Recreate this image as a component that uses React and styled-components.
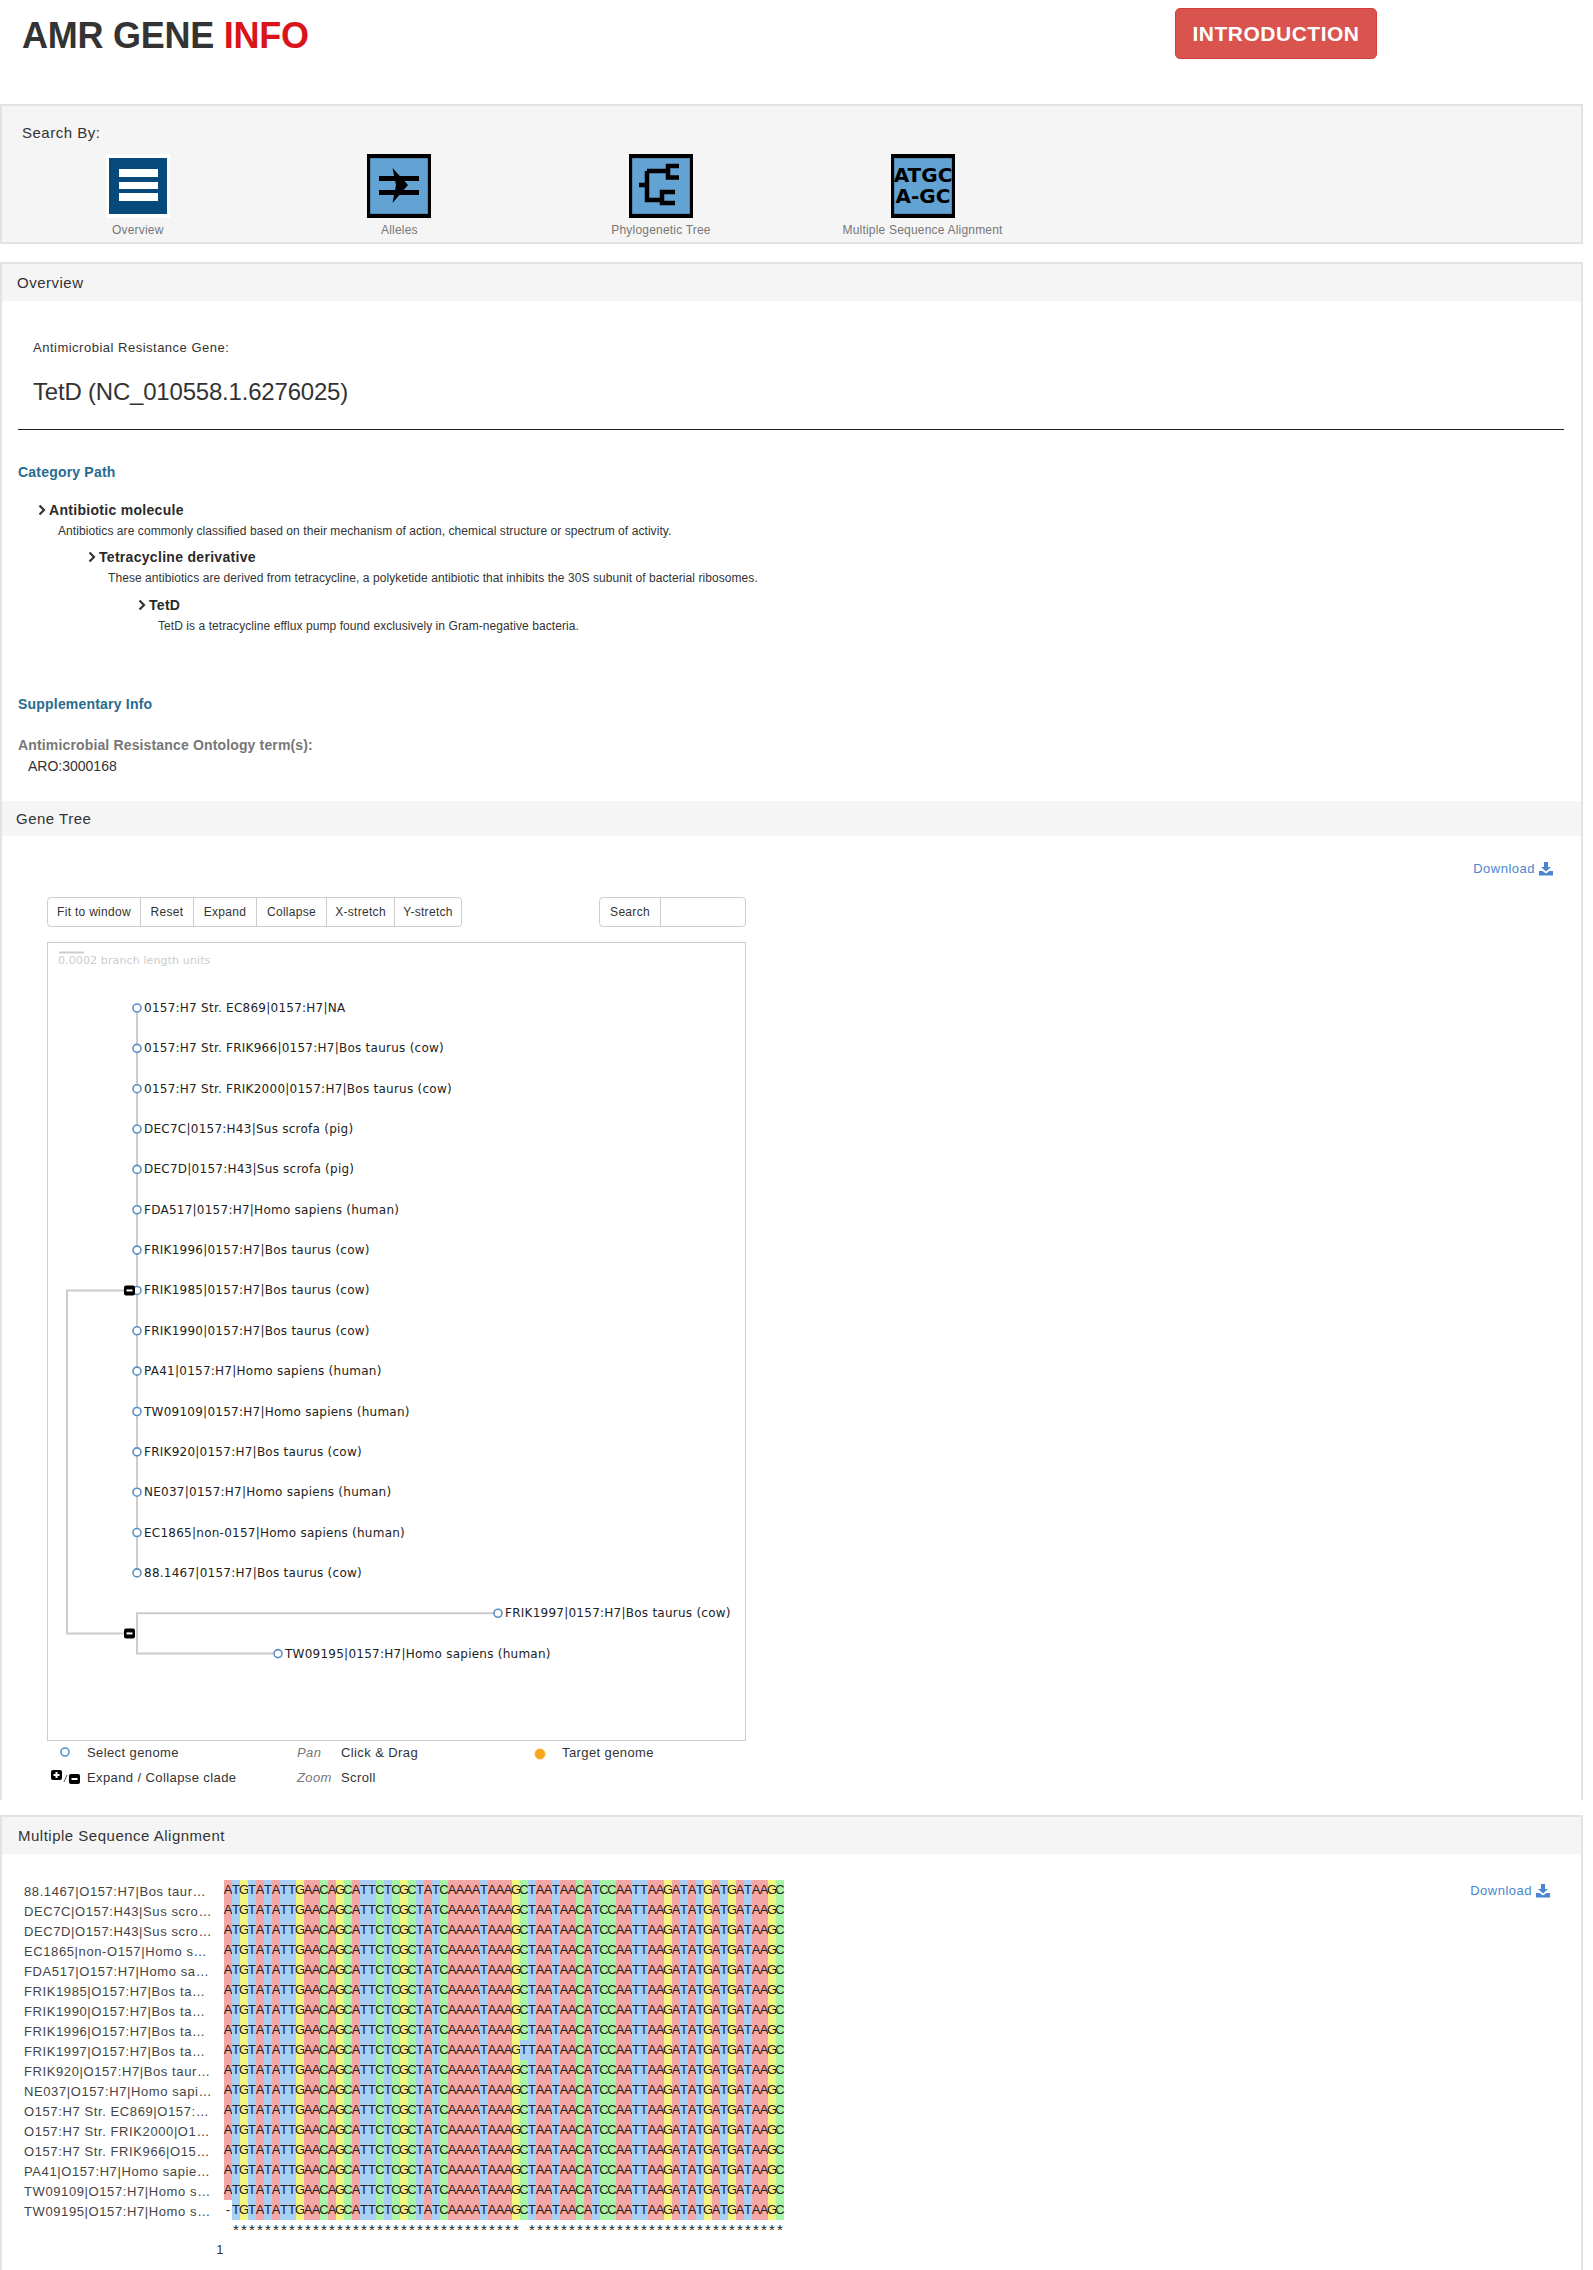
import React from "react";
import styled, { createGlobalStyle } from "styled-components";

const GlobalStyle = createGlobalStyle`
  body {
    margin: 0;
    background: #fff;
    color: #333;
    font-family: "Liberation Sans", Arial, sans-serif;
    font-size: 13px;
    letter-spacing: 0.5px;
  }
`;

const Page = styled.div`
  width: 1583px;
`;

const Header = styled.header`
  display: grid;
  grid-template-columns: 1175px 202px;
  height: 104px;
  padding-top: 8px;
  box-sizing: border-box;
`;

const Title = styled.h1`
  margin: 0;
  padding: 10px 0 0 22px;
  font-size: 36px;
  line-height: 36px;
  font-weight: 700;
  letter-spacing: -0.25px;
  color: #333;
`;

const TitleAccent = styled.span`
  color: #d9141a;
`;

const IntroButton = styled.button`
  height: 51px;
  padding-top: 2px;
  border: 1px solid #d43f3a;
  border-radius: 5px;
  background: #d9534f;
  color: #fff;
  font-family: inherit;
  font-size: 21px;
  font-weight: 700;
  letter-spacing: 0.5px;
`;

const SearchPanel = styled.section`
  height: 140px;
  box-sizing: border-box;
  margin-bottom: 18px;
  padding-top: 18px;
  border: 2px solid #e3e3e3;
  background: #f5f5f5;
`;

const SearchLabel = styled.div`
  margin-left: 20px;
  font-size: 15px;
  line-height: 18px;
`;

const SearchRow = styled.div`
  display: grid;
  grid-template-columns: repeat(4, 261.6px);
  margin: 12px 0 0 5px;
`;

const SearchTile = styled.div`
  display: flex;
  flex-direction: column;
  align-items: center;
  gap: 4px;
  color: #777;
  font-size: 12px;
  line-height: 16px;
  letter-spacing: 0.2px;
`;

const TileIcon = styled.svg`
  display: block;
  width: 64px;
  height: 64px;
`;

const Panel = styled.section`
  border: 2px solid #e3e3e3;
  border-bottom: 0;
  margin-bottom: ${(props) => props.$gap || 0}px;
  padding-bottom: ${(props) => props.$bottom || 0}px;
`;

const PanelHeading = styled.h2`
  margin: 0;
  height: ${(props) => props.$height || 37}px;
  line-height: ${(props) => (props.$height || 37) + 1}px;
  padding-left: ${(props) => props.$left || 15}px;
  background: #f5f5f5;
  font-size: 15px;
  font-weight: 400;
  letter-spacing: 0.5px;
`;

const OverviewBody = styled.div`
  padding-bottom: 26px;
`;

const GeneLabel = styled.div`
  margin: 38px 0 0 31px;
  line-height: 18px;
`;

const GeneName = styled.div`
  margin: 20px 0 0 31px;
  font-size: 24px;
  line-height: 30px;
  letter-spacing: -0.2px;
`;

const Rule = styled.hr`
  margin: 22px 17px 0 16px;
  border: 0;
  border-top: 1px solid #222;
`;

const SubTitle = styled.h3`
  margin: ${(props) => props.$top}px 0 0 16px;
  color: #286b8f;
  font-size: 14px;
  line-height: 18px;
  letter-spacing: 0.2px;
`;

const CategoryItem = styled.div`
  margin-top: ${(props) => props.$top}px;
  padding-left: ${(props) => 36 + props.$depth * 50}px;
`;

const CategoryName = styled.div`
  display: flex;
  align-items: center;
  gap: 3px;
  color: #2a2a2a;
  font-size: 14px;
  font-weight: 700;
  line-height: 20px;
  letter-spacing: 0.3px;
`;

const CategoryText = styled.div`
  margin: 2px 0 0 20px;
  font-size: 12px;
  line-height: 18px;
  letter-spacing: 0.07px;
`;

const OntologyTitle = styled.div`
  margin: 23px 0 0 16px;
  color: #777;
  font-size: 14px;
  font-weight: 700;
  line-height: 18px;
  letter-spacing: 0.15px;
`;

const OntologyTerm = styled.div`
  margin: 3px 0 0 26px;
  line-height: 18px;
  font-size: 14px;
  letter-spacing: 0;
`;

const DownloadLink = styled.a`
  display: flex;
  align-items: center;
  justify-content: flex-end;
  gap: 4px;
  color: #4a86d0;
  font-size: 13px;
  line-height: 18px;
`;

const DownloadRow = styled.div`
  margin-top: 24px;
  padding-right: 28px;
`;

const MsaDownload = styled(DownloadLink)`
  align-self: flex-start;
  margin-top: 2px;
`;

const TreeSection = styled.div`
  margin-left: 45px;
  width: 699px;
`;

const Toolbar = styled.div`
  display: flex;
  justify-content: space-between;
  margin-top: 19px;
`;

const ButtonGroup = styled.div`
  display: flex;
  height: 30px;
  box-sizing: border-box;
  border: 1px solid #ccc;
  border-radius: 4px;
`;

const ToolButton = styled.div`
  display: flex;
  align-items: center;
  width: ${(props) => props.$width}px;
  justify-content: center;
  box-sizing: border-box;
  border-left: 1px solid #ccc;
  font-size: 12px;
  letter-spacing: 0.3px;
  &:first-child {
    border-left: 0;
  }
`;

const TreeBox = styled.div`
  margin-top: 15px;
  height: 799px;
  box-sizing: border-box;
  border: 1px solid #ccc;
`;

const TreeSvg = styled.svg`
  display: block;
  width: 697px;
  height: 797px;
  font-family: "DejaVu Sans", sans-serif;
  font-size: 12px;
  letter-spacing: 0.25px;
`;

const Legend = styled.div`
  display: grid;
  grid-template-columns: 40px 210px 44px 193px 28px auto;
  grid-auto-rows: 25px;
  align-items: center;
  margin-top: -1px;
  font-size: 13px;
  letter-spacing: 0.4px;
  color: #333;
`;

const LegendHint = styled.span`
  color: #777;
  font-style: italic;
`;

const LegendIcon = styled.svg`
  display: block;
`;

const MsaBody = styled.div`
  display: flex;
  justify-content: space-between;
  padding: 26px 31px 10px 22px;
`;

const MsaGrid = styled.div`
  display: grid;
  grid-template-columns: 200px 560px;
  grid-auto-rows: 20px;
`;

const SeqName = styled.div`
  padding-top: 2px;
  line-height: 20px;
  font-size: 13px;
  letter-spacing: 0.6px;
  color: #444;
  white-space: nowrap;
`;

const SeqRow = styled.div`
  display: grid;
  grid-template-columns: repeat(70, 8px);
`;

const BASE_COLORS = {
  A: "#f5a6a6",
  T: "#a8cff5",
  G: "#f4f57f",
  C: "#a8f5a8",
  "-": "#fff",
  "*": "transparent",
  " ": "transparent",
};

const Base = styled.span`
  display: flex;
  justify-content: center;
  background: ${(props) => BASE_COLORS[props.$base]};
  color: #222;
  font-size: ${(props) => (props.$base === "*" ? 15 : 13)}px;
  line-height: 20px;
  letter-spacing: 0;
`;

const RulerMark = styled.div`
  text-align: right;
  line-height: 20px;
`;

const SEQUENCE =
  "ATGTATATTGAACAGCATTCTCGCTATCAAAATAAAGCTAATAACATCCAATTAAGATATGATGATAAGC";
const VARIANT = SEQUENCE.slice(0, 37) + "T" + SEQUENCE.slice(38);
const GAPPED = "-" + SEQUENCE.slice(1);
const CONSENSUS = " " + "*".repeat(36) + " " + "*".repeat(32);

const alignment = [
  ["88.1467|O157:H7|Bos taur…", SEQUENCE],
  ["DEC7C|O157:H43|Sus scro…", SEQUENCE],
  ["DEC7D|O157:H43|Sus scro…", SEQUENCE],
  ["EC1865|non-O157|Homo s…", SEQUENCE],
  ["FDA517|O157:H7|Homo sa…", SEQUENCE],
  ["FRIK1985|O157:H7|Bos ta…", SEQUENCE],
  ["FRIK1990|O157:H7|Bos ta…", SEQUENCE],
  ["FRIK1996|O157:H7|Bos ta…", SEQUENCE],
  ["FRIK1997|O157:H7|Bos ta…", VARIANT],
  ["FRIK920|O157:H7|Bos taur…", SEQUENCE],
  ["NE037|O157:H7|Homo sapi…", SEQUENCE],
  ["O157:H7 Str. EC869|O157:…", SEQUENCE],
  ["O157:H7 Str. FRIK2000|O1…", SEQUENCE],
  ["O157:H7 Str. FRIK966|O15…", SEQUENCE],
  ["PA41|O157:H7|Homo sapie…", SEQUENCE],
  ["TW09109|O157:H7|Homo s…", SEQUENCE],
  ["TW09195|O157:H7|Homo s…", GAPPED],
];

const leaves = [
  "0157:H7 Str. EC869|0157:H7|NA",
  "0157:H7 Str. FRIK966|0157:H7|Bos taurus (cow)",
  "0157:H7 Str. FRIK2000|0157:H7|Bos taurus (cow)",
  "DEC7C|0157:H43|Sus scrofa (pig)",
  "DEC7D|0157:H43|Sus scrofa (pig)",
  "FDA517|0157:H7|Homo sapiens (human)",
  "FRIK1996|0157:H7|Bos taurus (cow)",
  "FRIK1985|0157:H7|Bos taurus (cow)",
  "FRIK1990|0157:H7|Bos taurus (cow)",
  "PA41|0157:H7|Homo sapiens (human)",
  "TW09109|0157:H7|Homo sapiens (human)",
  "FRIK920|0157:H7|Bos taurus (cow)",
  "NE037|0157:H7|Homo sapiens (human)",
  "EC1865|non-0157|Homo sapiens (human)",
  "88.1467|0157:H7|Bos taurus (cow)",
];

const toolButtons = [
  ["Fit to window", 92],
  ["Reset", 53],
  ["Expand", 63],
  ["Collapse", 70],
  ["X-stretch", 68],
  ["Y-stretch", 67],
];

// tree svg coordinates: page position minus the box corner
const leafY = (i) => 65 + 40.35 * i;
const STEM_X = 89;

const LINE = { stroke: "#ccc", strokeWidth: 2, fill: "none" };
const NODE = { r: 4, fill: "#fff", stroke: "#5b8fc2", strokeWidth: 1.6 };

const Leaf = ({ x, y, label }) => (
  <g>
    <circle cx={x} cy={y} {...NODE} />
    <text x={x + 7} y={y + 4} fill="#222">
      {label}
    </text>
  </g>
);

const Collapse = ({ x, y }) => (
  <g>
    <rect x={x} y={y} width="11" height="10" rx="2" fill="#000" />
    <rect x={x + 2.5} y={y + 4} width="6" height="2" fill="#fff" />
  </g>
);

const GeneTree = () => (
  <TreeSvg viewBox="0 0 697 797">
    <path d="M11 9.5H36" stroke="#ccc" strokeWidth="2" fill="none" />
    <text x="10" y="21" fill="#ccc" fontSize="11" letterSpacing="0.12">
      0.0002 branch length units
    </text>
    <path d={`M${STEM_X} ${leafY(0)}V${leafY(14)}`} {...LINE} />
    <path d={`M76 ${leafY(7)}H19V${leafY(15.5)}H76`} {...LINE} />
    <path d={`M450 ${leafY(15)}H${STEM_X}V${leafY(16)}H230`} {...LINE} />
    {leaves.map((label, i) => (
      <Leaf key={label} x={STEM_X} y={leafY(i)} label={label} />
    ))}
    <Collapse x={76} y={leafY(7) - 5} />
    <Collapse x={76} y={leafY(15.5) - 5} />
    <Leaf x={450} y={leafY(15)} label="FRIK1997|0157:H7|Bos taurus (cow)" />
    <Leaf x={230} y={leafY(16)} label="TW09195|0157:H7|Homo sapiens (human)" />
  </TreeSvg>
);

const BLUE = "#62a3d4";

const TileFrame = ({ children }) => (
  <TileIcon viewBox="0 0 64 64">
    <rect width="64" height="64" fill="#000" />
    <rect x="3" y="4" width="58" height="56" fill="#3a6d92" />
    <rect x="3.5" y="4.5" width="57" height="55" fill={BLUE} />
    {children}
  </TileIcon>
);

const OverviewIcon = () => (
  <TileIcon viewBox="0 0 64 64">
    <rect width="64" height="64" fill="#fff" />
    <rect x="3" y="4" width="58" height="56" fill="#064a7b" />
    <rect x="13" y="15" width="39" height="8" fill="#fff" />
    <rect x="13" y="28" width="39" height="7" fill="#fff" />
    <rect x="13" y="39" width="39" height="8" fill="#fff" />
  </TileIcon>
);

const AllelesIcon = () => (
  <TileFrame>
    <rect x="12" y="22" width="40" height="5" fill="#000" />
    <rect x="12" y="36" width="40" height="5" fill="#000" />
    <polygon points="25.5,14 41,31 25.5,49 29,31" fill="#000" />
  </TileFrame>
);

const TreeIcon = () => (
  <TileFrame>
    <path
      d="M10 31H18M18 17V46H33M18 17H39M50 12H39V23.5H50M46 38H33V49H46"
      stroke="#000"
      strokeWidth="4.5"
      fill="none"
    />
  </TileFrame>
);

const MsaIcon = () => (
  <TileFrame>
    <g
      fontFamily="'DejaVu Sans', sans-serif"
      fontWeight="700"
      fontSize="20"
      textAnchor="middle"
      letterSpacing="0"
    >
      <text x="32" y="28">
        ATGC
      </text>
      <text x="32" y="49">
        A-GC
      </text>
    </g>
  </TileFrame>
);

const DownloadIcon = () => (
  <svg width="14" height="14" viewBox="0 0 14 14" fill="#4a86d0">
    <path d="M5 0H9V5H12L7 9.5L2 5H5Z" />
    <path d="M0 9H3.5L7 11.5L10.5 9H14V13.5H0Z" />
  </svg>
);

const Chevron = () => (
  <svg width="8" height="12" viewBox="0 0 8 12">
    <path d="M1.5 1.5L6 6L1.5 10.5" stroke="#333" strokeWidth="2.2" fill="none" />
  </svg>
);

const categories = [
  [
    "Antibiotic molecule",
    "Antibiotics are commonly classified based on their mechanism of action, chemical structure or spectrum of activity.",
    19,
  ],
  [
    "Tetracycline derivative",
    "These antibiotics are derived from tetracycline, a polyketide antibiotic that inhibits the 30S subunit of bacterial ribosomes.",
    7,
  ],
  [
    "TetD",
    "TetD is a tetracycline efflux pump found exclusively in Gram-negative bacteria.",
    8,
  ],
];

const Sequence = ({ text }) => (
  <SeqRow>
    {text.split("").map((base, i) => (
      <Base key={i} $base={base}>
        {base}
      </Base>
    ))}
  </SeqRow>
);

const App = () => (
  <Page>
    <GlobalStyle />
    <Header>
      <Title>
        AMR GENE <TitleAccent>INFO</TitleAccent>
      </Title>
      <IntroButton>INTRODUCTION</IntroButton>
    </Header>

    <SearchPanel>
      <SearchLabel>Search By:</SearchLabel>
      <SearchRow>
        <SearchTile>
          <OverviewIcon />
          Overview
        </SearchTile>
        <SearchTile>
          <AllelesIcon />
          Alleles
        </SearchTile>
        <SearchTile>
          <TreeIcon />
          Phylogenetic Tree
        </SearchTile>
        <SearchTile>
          <MsaIcon />
          Multiple Sequence Alignment
        </SearchTile>
      </SearchRow>
    </SearchPanel>

    <Panel $gap={15} $bottom={10}>
      <PanelHeading>Overview</PanelHeading>
      <OverviewBody>
        <GeneLabel>Antimicrobial Resistance Gene:</GeneLabel>
        <GeneName>TetD (NC_010558.1.6276025)</GeneName>
        <Rule />
        <SubTitle $top={33}>Category Path</SubTitle>
        {categories.map(([name, text, top], depth) => (
          <CategoryItem key={name} $depth={depth} $top={top}>
            <CategoryName>
              <Chevron />
              {name}
            </CategoryName>
            <CategoryText>{text}</CategoryText>
          </CategoryItem>
        ))}
        <SubTitle $top={60}>Supplementary Info</SubTitle>
        <OntologyTitle>Antimicrobial Resistance Ontology term(s):</OntologyTitle>
        <OntologyTerm>ARO:3000168</OntologyTerm>
      </OverviewBody>

      <PanelHeading $height={35} $left={14}>
        Gene Tree
      </PanelHeading>
      <DownloadRow>
        <DownloadLink>
          Download <DownloadIcon />
        </DownloadLink>
      </DownloadRow>
      <TreeSection>
        <Toolbar>
          <ButtonGroup>
            {toolButtons.map(([label, width]) => (
              <ToolButton key={label} $width={width}>
                {label}
              </ToolButton>
            ))}
          </ButtonGroup>
          <ButtonGroup>
            <ToolButton $width={60}>Search</ToolButton>
            <ToolButton $width={85} />
          </ButtonGroup>
        </Toolbar>
        <TreeBox>
          <GeneTree />
        </TreeBox>
        <Legend>
          <LegendIcon width="36" height="12" viewBox="0 0 36 12">
            <circle cx="18" cy="5" r="4" fill="#fff" stroke="#5b8fc2" strokeWidth="1.6" />
          </LegendIcon>
          <span>Select genome</span>
          <LegendHint>Pan</LegendHint>
          <span>Click &amp; Drag</span>
          <LegendIcon width="14" height="14" viewBox="0 0 14 14">
            <circle cx="6" cy="8" r="5" fill="#f5a81c" stroke="#fbb03b" strokeWidth="1" />
          </LegendIcon>
          <span>Target genome</span>

          <LegendIcon width="36" height="16" viewBox="0 0 36 16">
            <rect x="4" y="0" width="11" height="10" rx="2" fill="#000" />
            <path d="M6.5 5H12.5M9.5 2V8" stroke="#fff" strokeWidth="2" />
            <path d="M17 12L20 5" stroke="#555" strokeWidth="1" />
            <rect x="22" y="4" width="11" height="10" rx="2" fill="#000" />
            <rect x="24.5" y="8" width="6" height="2" fill="#fff" />
          </LegendIcon>
          <span>Expand / Collapse clade</span>
          <LegendHint>Zoom</LegendHint>
          <span>Scroll</span>
        </Legend>
      </TreeSection>
    </Panel>

    <Panel>
      <PanelHeading $left={16}>Multiple Sequence Alignment</PanelHeading>
      <MsaBody>
        <MsaGrid>
          {alignment.map(([name, text]) => (
            <React.Fragment key={name}>
              <SeqName>{name}</SeqName>
              <Sequence text={text} />
            </React.Fragment>
          ))}
          <div />
          <Sequence text={CONSENSUS} />
          <RulerMark>1</RulerMark>
        </MsaGrid>
        <MsaDownload>
          Download <DownloadIcon />
        </MsaDownload>
      </MsaBody>
    </Panel>
  </Page>
);

export default App;
